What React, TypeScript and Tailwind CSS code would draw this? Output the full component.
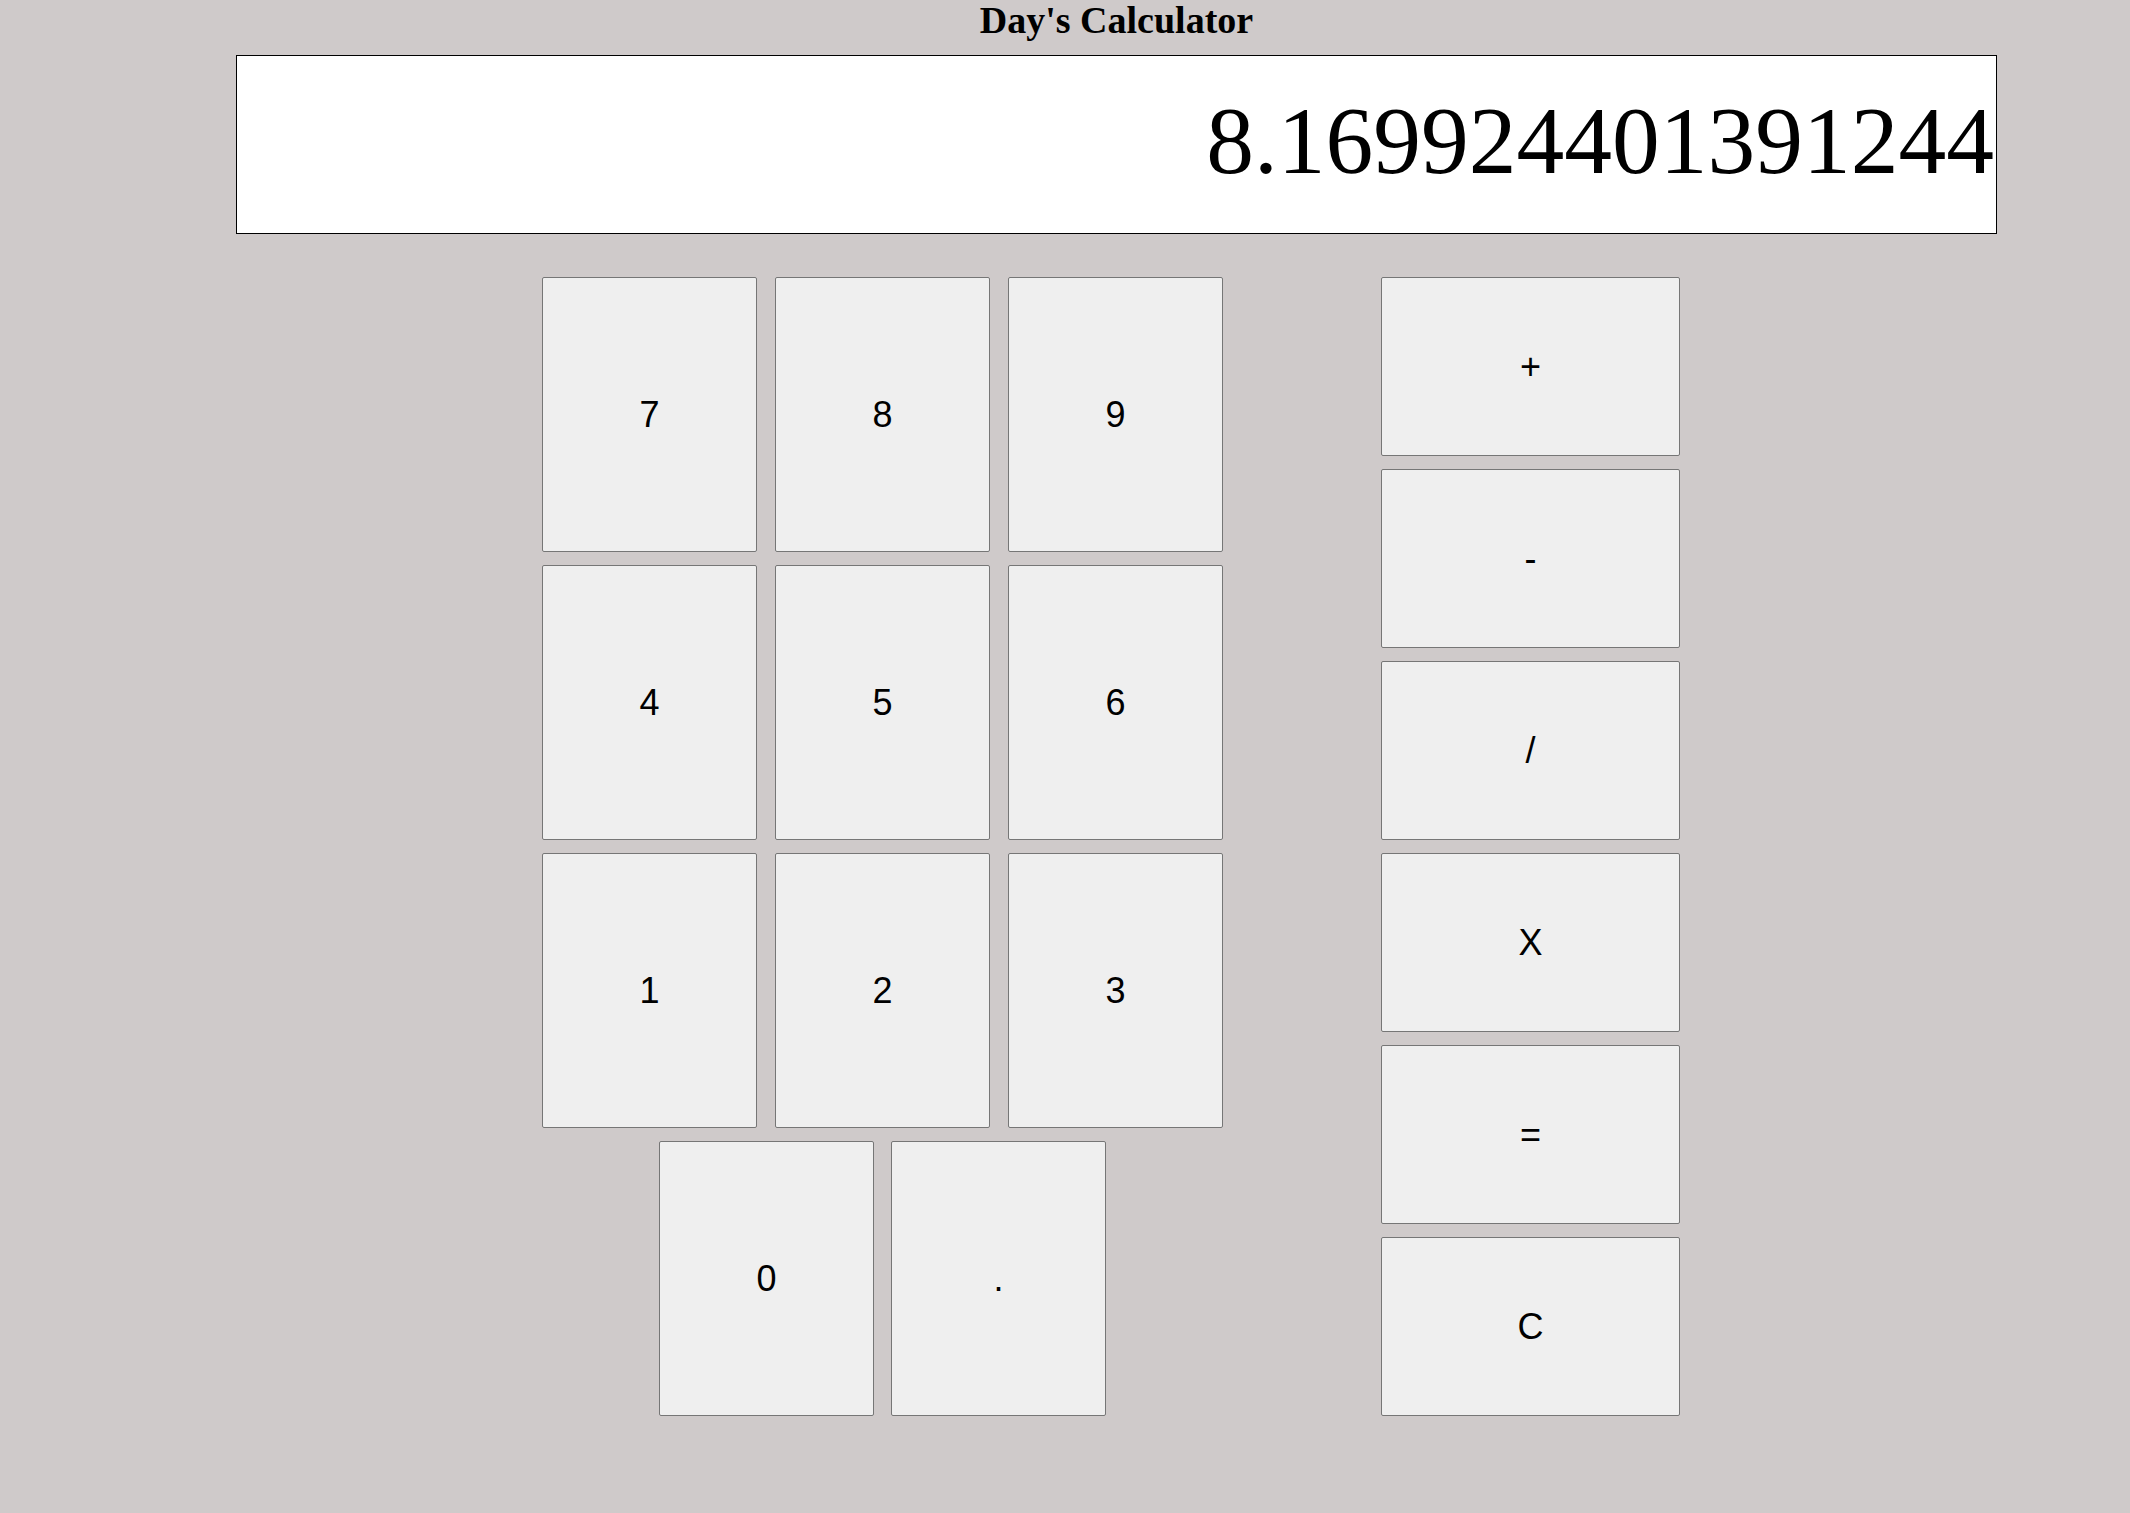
import React from "react";

const btn =
  "flex items-center justify-center bg-[#efefef] border border-[#767676] rounded-[2px] text-[36px] text-black font-['Liberation_Sans',Arial,sans-serif]";

export default function App() {
  const digits = ["7", "8", "9", "4", "5", "6", "1", "2", "3"];
  const ops = ["+", "-", "/", "X", "=", "C"];
  return (
    <div className="min-h-[1513px] w-[2130px] bg-[#cfcaca]">
      <div className="ml-[236px] w-[1761px]">
        <h1 className="pt-[1px] text-center font-['Liberation_Serif','Times_New_Roman',serif] font-bold text-[38px] leading-[38px] text-black">
          Day's Calculator
        </h1>
        <div className="mt-[16px] h-[179px] border border-black bg-white pt-[38px] pr-[2px] text-right font-['Liberation_Serif','Times_New_Roman',serif] text-[95.5px] leading-[95.5px] text-black">
          8.169924401391244
        </div>
        <div className="mt-[43px] ml-[306px] flex gap-[158px]">
          <div className="flex flex-col gap-[13px]">
            <div className="grid grid-cols-[215px_215px_215px] gap-x-[18px] gap-y-[13px]">
              {digits.map((d) => (
                <button key={d} className={`${btn} h-[275px] w-[215px]`}>
                  {d}
                </button>
              ))}
            </div>
            <div className="flex justify-center gap-[17px]">
              <button className={`${btn} h-[275px] w-[215px]`}>0</button>
              <button className={`${btn} h-[275px] w-[215px]`}>.</button>
            </div>
          </div>
          <div className="flex flex-col gap-[13px]">
            {ops.map((o) => (
              <button key={o} className={`${btn} h-[179px] w-[299px]`}>
                {o}
              </button>
            ))}
          </div>
        </div>
      </div>
    </div>
  );
}
